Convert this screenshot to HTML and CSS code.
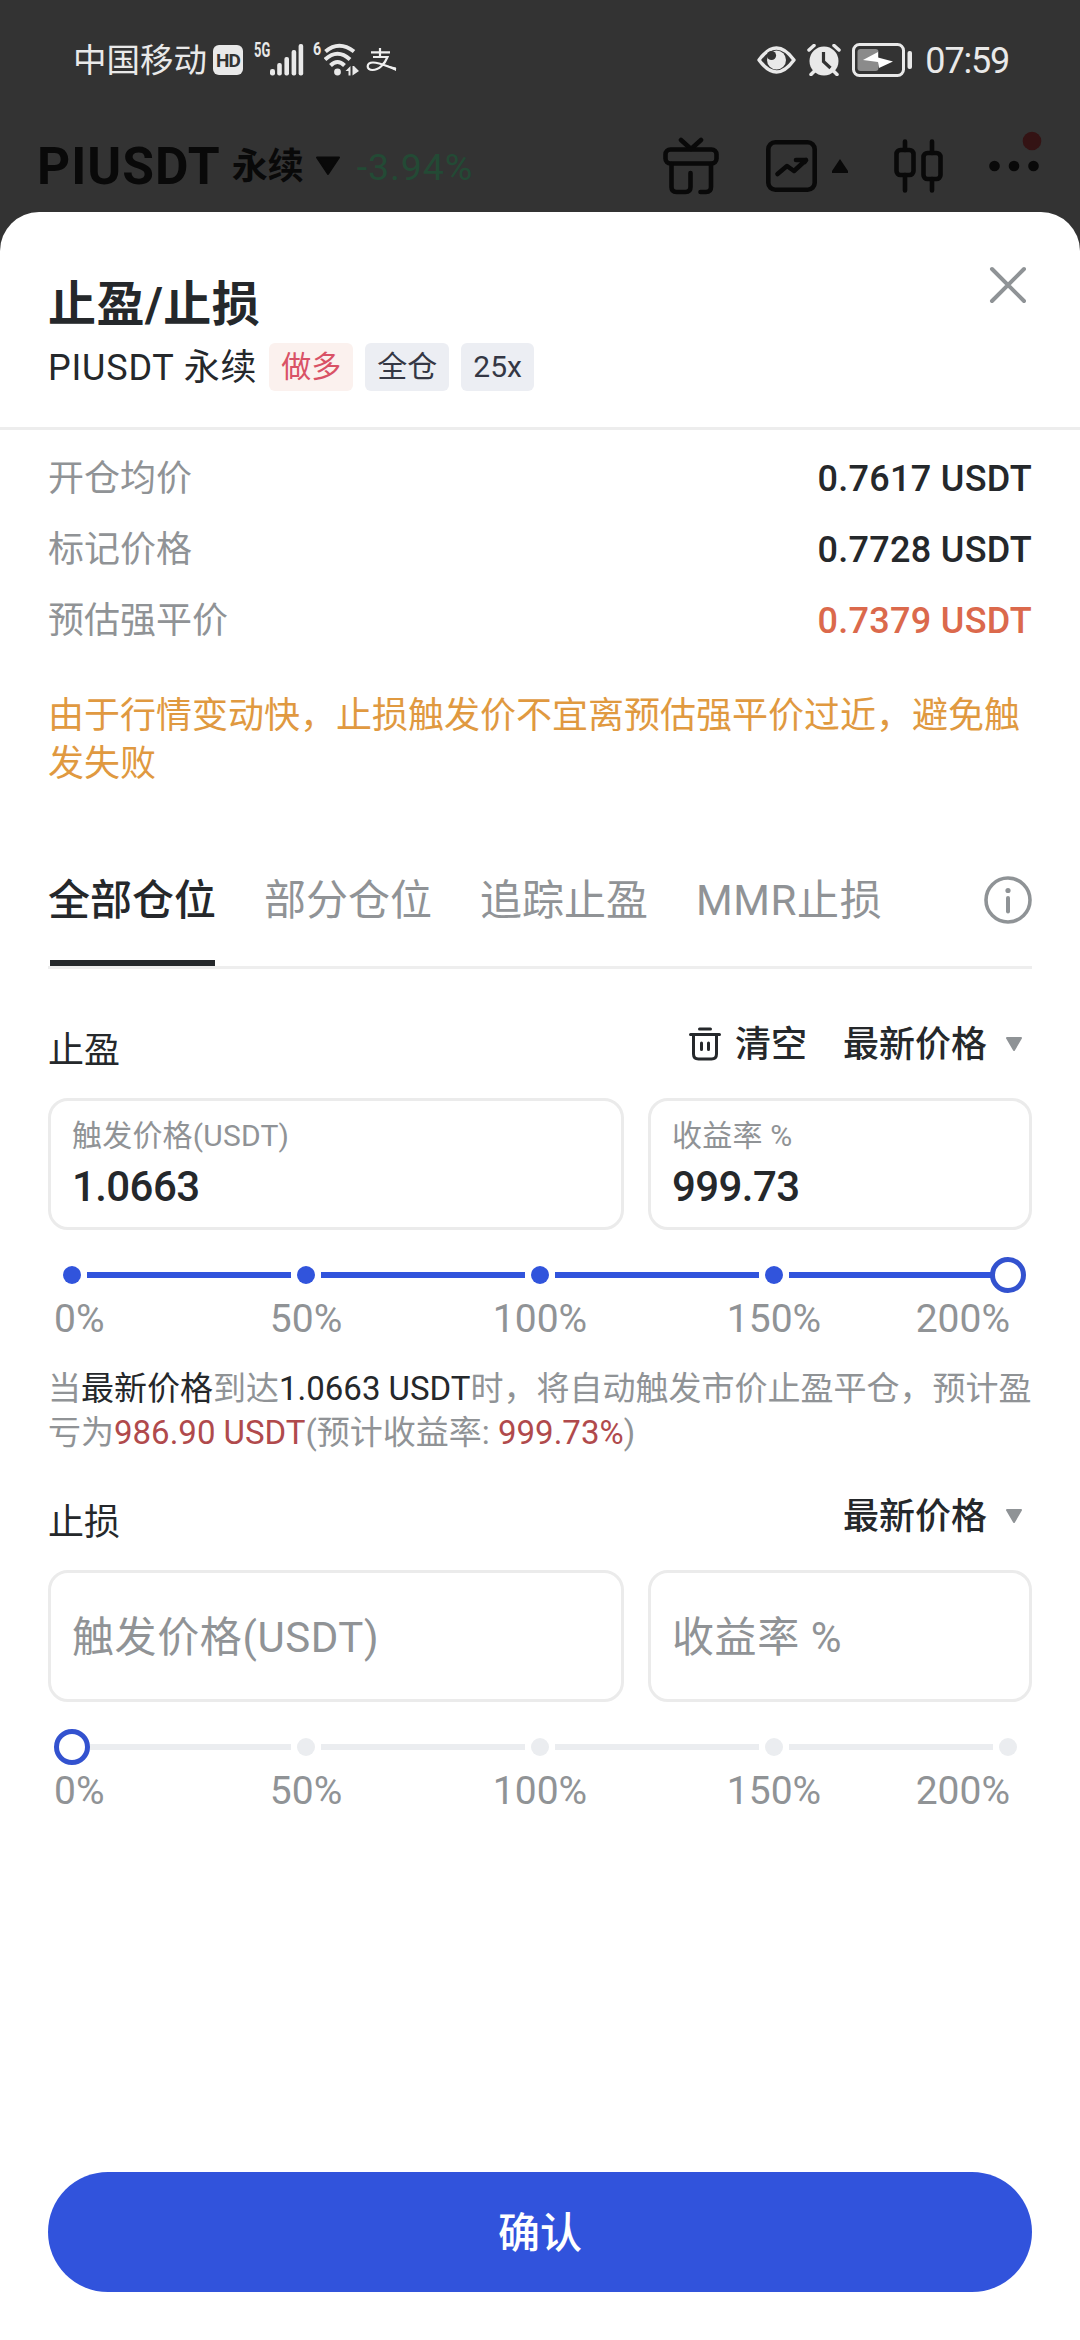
FILE: index.html
```html
<!DOCTYPE html>
<html lang="zh-CN">
<head>
<meta charset="utf-8">
<title>止盈/止损</title>
<link rel="stylesheet" href="styles.css">
</head>
<body>
<div class="screen">
  <div class="status">
    <div class="status-left">
      <span class="carrier">中国移动</span>
      <span class="hd">HD</span>
      <span class="net">5G</span>
      <svg class="signal" width="34" height="32" viewBox="0 0 34 32" fill="#e9e9e9"><rect x="0" y="25" width="5" height="6.500" rx="2.200"/><rect x="7.200" y="19" width="4.600" height="12.500" rx="2"/><rect x="14.400" y="13" width="4.600" height="18.500" rx="2"/><rect x="21.600" y="6" width="4.600" height="25.500" rx="2"/><rect x="28.600" y="0" width="4.600" height="31.500" rx="2"/></svg>
      <span class="gen">6</span>
      <svg class="wifi" width="35" height="34" viewBox="0 0 35 34" fill="none" stroke="#e9e9e9" stroke-width="4"><path d="M1.500 8.500Q15 -3 30 8.500"/><path d="M1 16.500Q13.500 5 26 16.500"/><path d="M6.500 22.500Q13.500 15.500 20.500 22.500"/><circle cx="13.500" cy="29" r="3.400" fill="#e9e9e9" stroke="none"/><path d="M21.500 28l5-5v9.500h-2V28zM28.500 32.500V23h1.500l5 5z" fill="#e9e9e9" stroke="none"/></svg>
      <svg class="pay" width="32" height="24" viewBox="0 0 32 24" fill="none" stroke="#f0f0f0" stroke-width="2.200"><path d="M14 0v8M5 4.300h19M7 9h14.500C19 15.500 13 22 6.500 22 0 22 0 14.500 7 14.500 14 14.500 21 18.500 30 21.500"/><path d="M19 17l11 2.500v3.500z" fill="#f0f0f0" stroke="none"/></svg>
    </div>
    <div class="status-right">
      <svg width="39" height="28" viewBox="0 0 39 28"><path d="M2 14Q19.500 -10 37 14Q19.500 38 2 14Z" fill="none" stroke="#e9e9e9" stroke-width="3.400" stroke-linejoin="round"/><circle cx="19.500" cy="14" r="9.500" fill="#e9e9e9"/><circle cx="14.500" cy="9.500" r="4.600" fill="#333"/></svg>
      <svg class="alarm" width="34" height="32" viewBox="0 0 34 32"><circle cx="17" cy="17" r="14.500" fill="#e9e9e9"/><path d="M2 6l5-4.500M32 6l-5-4.500M4 30.500l4-4M30 30.500l-4-4" stroke="#e9e9e9" stroke-width="3.500" stroke-linecap="round"/><path d="M16.500 8v9.500l7 6.500" fill="none" stroke="#333" stroke-width="3.200"/></svg>
      <svg class="battery" width="61" height="34" viewBox="0 0 61 34"><rect x="1.500" y="1.500" width="50" height="31" rx="6" fill="none" stroke="#e9e9e9" stroke-width="3"/><rect x="5.500" y="6" width="21" height="22" rx="3" fill="#8b8b8b"/><path d="M11 17l15-8v5.500l15 4-14 6.500-1-6z" fill="#fff"/><rect x="55.500" y="8" width="4.500" height="18" rx="2" fill="#e9e9e9"/></svg>
      <span class="time">07:59</span>
    </div>
  </div>

  <div class="topbar">
    <span class="pair">PIUSDT</span>
    <span class="perp">永续</span>
    <svg class="pair-arrow" width="26" height="20" viewBox="0 0 26 20"><path d="M2 1.500h22L13 18z" fill="#090909" stroke="#090909" stroke-width="2" stroke-linejoin="round"/></svg>
    <span class="change">-3.94%</span>
    <div class="tools">
      <svg width="56" height="58" viewBox="0 0 56 58" fill="none" stroke="#090909" stroke-width="4.600" stroke-linecap="round" stroke-linejoin="round"><path d="M18 3l10 9L38 3"/><rect x="2.500" y="12.500" width="51" height="14" rx="5"/><path d="M8.500 27v23q0 5 5 5h9q5 0 5-5V36M48 27v23q0 5-5 5h-5.500"/></svg>
      <svg class="chart" width="51" height="52" viewBox="0 0 51 52" fill="none" stroke="#090909" stroke-width="4.600" stroke-linecap="round" stroke-linejoin="round"><rect x="2.300" y="2.300" width="46.400" height="47.400" rx="7"/><path d="M11.500 34L21 26l7 5 12-11M30 20h10l-1.500 2"/></svg>
      <svg class="up" width="16" height="14" viewBox="0 0 16 14"><path d="M8 0l8 12v2H0v-2z" fill="#090909"/></svg>
      <svg class="candles" width="49" height="54" viewBox="0 0 49 54" fill="none" stroke="#090909" stroke-width="4.600" stroke-linecap="round"><rect x="2.500" y="11" width="17" height="25" rx="4"/><rect x="29.500" y="14" width="17" height="26" rx="4"/><path d="M11 2.500V11M11 36v15.500M38 2.500V14M38 40v11.500"/></svg>
      <svg class="more" width="54" height="62" viewBox="0 0 54 62"><circle cx="6.500" cy="35" r="5.300" fill="#090909"/><circle cx="26" cy="35" r="5.300" fill="#090909"/><circle cx="45.500" cy="35" r="5.300" fill="#090909"/><circle cx="44" cy="10" r="9.300" fill="#341314"/></svg>
    </div>
  </div>

  <div class="sheet">
    <header class="head">
      <div>
        <h1 class="title">止盈/止损</h1>
        <div class="sub">
          <span class="sub-name">PIUSDT 永续</span>
          <span class="tag tag-long">做多</span>
          <span class="tag">全仓</span>
          <span class="tag">25x</span>
        </div>
      </div>
      <svg class="close" width="40" height="40" viewBox="0 0 40 40" stroke="#8f9396" stroke-width="4" stroke-linecap="round"><path d="M4 4l32 32M36 4L4 36"/></svg>
    </header>

    <div class="body">
      <dl class="info">
        <div class="info-row"><dt>开仓均价</dt><dd>0.7617 USDT</dd></div>
        <div class="info-row"><dt>标记价格</dt><dd>0.7728 USDT</dd></div>
        <div class="info-row"><dt>预估强平价</dt><dd class="liq">0.7379 USDT</dd></div>
      </dl>
      <p class="warn">由于行情变动快，止损触发价不宜离预估强平价过近，避免触<br>发失败</p>

      <nav class="tabs">
        <span class="tab active">全部仓位</span>
        <span class="tab">部分仓位</span>
        <span class="tab">追踪止盈</span>
        <span class="tab tab-mmr">MMR止损</span>
        <svg class="tip" width="48" height="48" viewBox="0 0 48 48"><circle cx="24" cy="24" r="22" fill="none" stroke="#8f9396" stroke-width="3.600"/><circle cx="24" cy="14.500" r="2.600" fill="#8f9396"/><path d="M24 22v13.500" stroke="#8f9396" stroke-width="4" stroke-linecap="round"/></svg>
      </nav>

      <section class="block">
        <div class="block-head">
          <span class="block-name">止盈</span>
          <span class="actions">
            <svg class="trash" width="32" height="34" viewBox="0 0 32 34" fill="none" stroke="#25282b" stroke-width="3" stroke-linecap="round"><path d="M10.500 2h11M1.500 7.500h29M4.500 8v19q0 5 5 5h13q5 0 5-5V8M12.500 16v6.500M19.500 16v6.500"/></svg>
            <span class="clear">清空</span>
            <span>最新价格</span>
            <svg class="down" width="18" height="16" viewBox="0 0 18 16"><path d="M2 2h14L9 14z" fill="#8f9396" stroke="#8f9396" stroke-width="2" stroke-linejoin="round"/></svg>
          </span>
        </div>
        <div class="fields">
          <div class="field"><span class="field-label">触发价格(USDT)</span><span class="field-value">1.0663</span></div>
          <div class="field"><span class="field-label">收益率 %</span><span class="field-value">999.73</span></div>
        </div>
        <div class="slider full">
          <i class="dot"></i><i class="seg"></i><i class="dot"></i><i class="seg"></i><i class="dot"></i><i class="seg"></i><i class="dot"></i><i class="seg"></i><i class="thumb"></i>
        </div>
        <div class="scale"><span>0%</span><span>50%</span><span>100%</span><span>150%</span><span>200%</span></div>
        <p class="note">当<b>最新价格</b>到达<b>1.0663 USDT</b>时，将自动触发市价止盈平仓，预计盈<br>亏为<em>986.90 USDT</em>(预计收益率: <em>999.73%</em>)</p>
      </section>

      <section class="block">
        <div class="block-head">
          <span class="block-name">止损</span>
          <span class="actions">
            <span>最新价格</span>
            <svg class="down" width="18" height="16" viewBox="0 0 18 16"><path d="M2 2h14L9 14z" fill="#8f9396" stroke="#8f9396" stroke-width="2" stroke-linejoin="round"/></svg>
          </span>
        </div>
        <div class="fields">
          <div class="field"><span class="field-hint">触发价格(USDT)</span></div>
          <div class="field"><span class="field-hint">收益率 %</span></div>
        </div>
        <div class="slider">
          <i class="thumb"></i><i class="seg"></i><i class="dot"></i><i class="seg"></i><i class="dot"></i><i class="seg"></i><i class="dot"></i><i class="seg"></i><i class="dot"></i>
        </div>
        <div class="scale"><span>0%</span><span>50%</span><span>100%</span><span>150%</span><span>200%</span></div>
      </section>
    </div>

    <button class="confirm">确认</button>
  </div>
</div>
</body>
</html>
```
FILE: styles.css
```css
* { box-sizing: border-box; margin: 0; padding: 0; }
body {
  width: 1080px;
  height: 2340px;
  background: #333;
  font-family: Roboto, "Noto Sans CJK SC", sans-serif;
  color: #25282b;
  white-space: nowrap;
}
svg { display: block; flex: none; }
.screen { width: 1080px; height: 2340px; display: flex; flex-direction: column; overflow: hidden; }

/* status bar */
.status { height: 120px; padding: 0 71px 0 73px; display: flex; justify-content: space-between; color: #e9e9e9; }
.status-left, .status-right { display: flex; align-items: center; }
.carrier { padding-top: 2px; font-size: 33.500px; line-height: 48px; }
.hd { width: 30px; height: 30px; margin-left: 6px; border-radius: 6px; background: #e9e9e9; color: #333; font-size: 19px; font-weight: 700; line-height: 31px; letter-spacing: -1px; text-align: center; }
.net { width: 16px; margin: -18px 0 0 11px; font-size: 19.500px; font-weight: 700; line-height: 20px; transform: scaleX(.66); transform-origin: left; }
.gen { width: 9px; margin: -22px 0 0 9px; font-size: 19px; font-weight: 700; line-height: 20px; transform: scaleX(.75); transform-origin: left; }
.wifi { margin-left: 2px; }
.pay { margin-left: 7px; }
.alarm { margin-left: 11px; }
.battery { margin-left: 11px; }
.time { margin-left: 12px; padding-top: 2px; font-size: 36px; line-height: 48px; letter-spacing: -1.200px; }

/* dimmed page behind the sheet */
.topbar { height: 92px; padding: 0 38px 0 37px; display: flex; align-items: center; color: #090909; }
.pair { padding-top: 2px; font-size: 51.500px; font-weight: 700; line-height: 60px; letter-spacing: 1px; }
.perp { margin: 0 0 0 11px; padding-top: 2px; font-size: 36px; font-weight: 700; line-height: 48px; }
.pair-arrow { margin-left: 11px; }
.change { margin-left: 16px; padding-top: 2px; color: #234a35; font-size: 37.500px; line-height: 48px; letter-spacing: .9px; }
.tools { margin-left: auto; display: flex; align-items: center; }
.chart { margin-left: 47px; }
.up { margin-left: 15px; }
.candles { margin-left: 46px; }
.more { margin: -9px 0 0 45px; }

/* sheet */
.sheet { flex: 1; background: #fff; border-radius: 39px 39px 0 0; display: flex; flex-direction: column; }
.head { height: 218px; padding: 58px 52px 0 48px; border-bottom: 3px solid #ededed; display: flex; justify-content: space-between; }
.title { font-size: 48px; font-weight: 700; line-height: 70px; letter-spacing: .5px; }
.sub { margin-top: 3px; height: 48px; display: flex; align-items: center; gap: 12px; }
.sub-name { padding-top: 2px; font-size: 36px; line-height: 48px; letter-spacing: .8px; }
.tag { height: 48px; padding: 0 12px; border-radius: 6px; background: #eceef3; color: #343744; font-size: 30px; line-height: 48px; }
.tag-long { background: #fbf1ee; color: #d95266; }
.close { margin-top: -5px; }
.body { padding: 13px 48px 0; }
.info-row { height: 71px; display: flex; justify-content: space-between; align-items: center; font-size: 36px; line-height: 48px; }
.info-row dt { color: #909396; }
.info-row dd { font-weight: 500; letter-spacing: .3px; }
.info-row .liq { color: #db694c; }
.warn { margin-top: 36px; color: #e09940; font-size: 36px; line-height: 48px; }
.tabs { margin-top: 68px; height: 113px; display: flex; gap: 48px; border-bottom: 3px solid #eee; }
.tab { height: 110px; color: #909396; font-size: 42px; line-height: 90px; }
.tab.active { color: #25282b; font-weight: 500; background: linear-gradient(#25282b, #25282b) center bottom / 165px 6px no-repeat; }
.tab-mmr { letter-spacing: .6px; }
.tip { margin: 20px 0 0 auto; }
.block { height: 472px; }
.block-head { height: 129px; padding-top: 51px; display: flex; justify-content: space-between; font-size: 36px; line-height: 48px; }
.block-name { padding-top: 7px; }
.actions { display: flex; align-items: center; height: 48px; padding-right: 9px; font-weight: 500; }
.actions span { padding-top: 2px; }
.trash { margin-right: 14px; }
.clear { margin-right: 36px; }
.down { margin-left: 18px; }
.fields { display: grid; grid-template-columns: 576px 384px; gap: 24px; }
.field { height: 132px; padding: 0 21px; border: 3px solid #ebebeb; border-radius: 20px; display: flex; flex-direction: column; justify-content: center; }
.field-label { color: #909396; font-size: 30px; line-height: 42px; letter-spacing: .2px; }
.field-value { padding-top: 4px; font-size: 42px; font-weight: 500; line-height: 52px; letter-spacing: -.6px; }
.field-hint { padding-top: 4px; color: #909396; font-size: 42px; line-height: 60px; letter-spacing: .6px; }
.slider { margin: 27px 6px 0; height: 36px; padding: 0 9px; display: flex; align-items: center; }
.dot { flex: none; width: 18px; height: 18px; border-radius: 50%; background: #ebedf0; }
.seg { flex: 1; height: 6px; margin: 0 6px; background: #ebedf0; }
.full .dot, .full .seg { background: #3154dc; }
/* the thumb sits over the ends of the track segments */
.thumb { flex: none; position: relative; z-index: 1; width: 36px; height: 36px; margin: 0 -9px; border: 5px solid #3352cf; border-radius: 50%; background: #fff; }
.scale { margin-left: 6px; padding-top: 2px; display: grid; grid-template-columns: 135px repeat(3, 234px) 119px; color: #909396; font-size: 39px; line-height: 48px; text-align: center; }
.scale span:first-child { text-align: left; }
.scale span:last-child { text-align: right; }
.note { margin-top: 24px; color: #909396; font-size: 33px; line-height: 44px; }
.note b { color: #25282b; font-weight: 400; }
.note em { color: #b04a4c; font-style: normal; }
.confirm { margin: auto 48px 48px; height: 120px; padding-top: 4px; border: 0; border-radius: 60px; background: #3153dc; color: #fff; font: 500 42px/116px Roboto, "Noto Sans CJK SC", sans-serif; }
```
